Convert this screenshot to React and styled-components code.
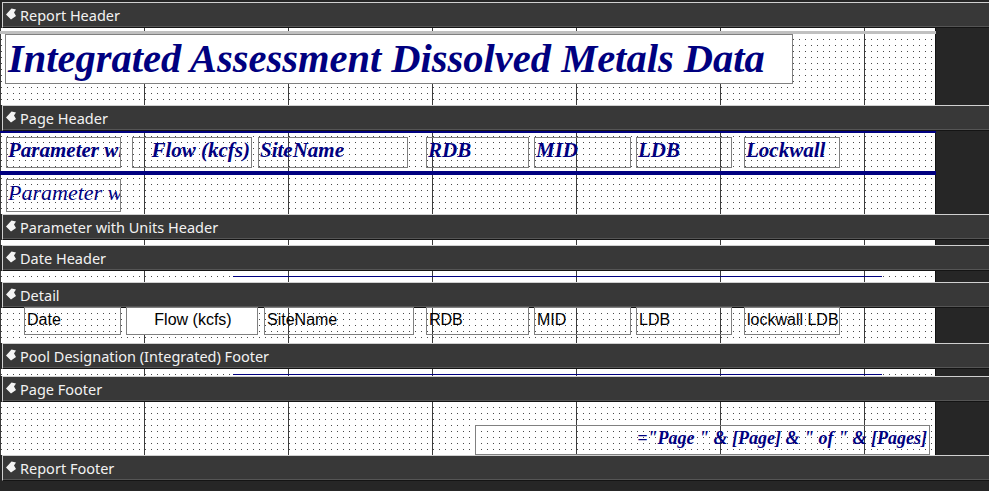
import React from 'react';
import styled, { createGlobalStyle } from 'styled-components';

const GlobalStyle = createGlobalStyle`
  html, body {
    margin: 0;
    padding: 0;
    background: #262626;
  }
  body {
    font-family: "Noto Sans", "Liberation Sans", sans-serif;
  }
`;

const NAVY = '#000080';

const Designer = styled.div`
  width: 989px;
  height: 491px;
  overflow: hidden;
  box-sizing: border-box;
  padding-top: 2px;
  background: #262626;
  display: flex;
  flex-direction: column;
`;

const Bar = styled.div`
  flex: none;
  height: 26px;
  box-sizing: border-box;
  margin-left: 2px;
  background: #383838;
  border-top: 1px solid #d0d0d0;
  border-left: 1px solid #d0d0d0;
  border-bottom: 1px solid #141414;
  box-shadow: inset 0 -1px 0 #555;
  display: flex;
  align-items: center;
  gap: 3px;
  padding-left: 3px;
  color: #f2f2f2;
  font-size: 14.5px;
`;

const Body = styled.div`
  flex: none;
  height: ${p => p.$h}px;
  display: flex;
  background: #262626;
`;

// design surface: white with ruler lines every inch and the dotted grid
const Canvas = styled.div`
  position: relative;
  width: 936px;
  height: 100%;
  background-color: #fff;
  background-image: repeating-linear-gradient(90deg, #3c3c3c 0 1px, transparent 1px 144px);
  box-shadow: inset -1px 0 0 #111;

  &::before {
    content: '';
    position: absolute;
    left: 0;
    top: 0;
    right: 4px;
    bottom: 0;
    background: repeating-linear-gradient(90deg, transparent 0 1px, #4a4a4a 1px 2px, transparent 2px 6px);
    mask-image: repeating-linear-gradient(180deg, transparent 0 5px, #000 5px 6px);
    -webkit-mask-image: repeating-linear-gradient(180deg, transparent 0 5px, #000 5px 6px);
  }
`;

const Control = styled.div`
  position: absolute;
  left: ${p => p.$x}px;
  top: ${p => p.$y}px;
  width: ${p => p.$w}px;
  height: ${p => p.$h}px;
  box-sizing: border-box;
  border: 1px solid #808080;
  background: ${p => (p.$fill ? '#fff' : 'transparent')};
  overflow: hidden;
  white-space: nowrap;
  display: flex;
  align-items: center;
  justify-content: ${p => p.$align || 'flex-start'};
  padding-left: 1px;
  padding-right: ${p => (p.$align === 'flex-end' ? '1px' : '0')};
`;

const Title = styled(Control)`
  font-family: "Liberation Serif", "Times New Roman", serif;
  font-weight: bold;
  font-style: italic;
  font-size: 40.5px;
  line-height: 48px;
  color: ${NAVY};
  padding-left: 2px;
`;

const HeadLabel = styled(Control)`
  font-family: "Liberation Serif", "Times New Roman", serif;
  font-weight: bold;
  font-style: italic;
  font-size: 21px;
  color: ${NAVY};
  padding-bottom: 4px;
`;

const GroupField = styled(Control)`
  font-family: "Liberation Serif", "Times New Roman", serif;
  font-style: italic;
  font-size: 22px;
  color: ${NAVY};
  padding-bottom: 5px;
`;

const DetailField = styled(Control)`
  font-family: "Liberation Sans", Arial, sans-serif;
  font-size: 16px;
  color: #000;
  padding-left: 2px;
  padding-bottom: 3px;
`;

const Expr = styled(Control)`
  font-family: "Liberation Serif", "Times New Roman", serif;
  font-weight: bold;
  font-style: italic;
  font-size: 18px;
  color: ${NAVY};
  padding-right: 2px;
  padding-bottom: 4px;
`;

const Rule = styled.div`
  position: absolute;
  left: ${p => p.$x}px;
  top: ${p => p.$y}px;
  width: ${p => p.$w}px;
  height: ${p => p.$h}px;
  background: ${p => p.$color || NAVY};
`;

const Dark = styled.div`
  flex: 1;
`;

const SectionIcon = () => (
  <svg width="11" height="12" viewBox="0 0 11 12" style={{ marginTop: -3 }}>
    <path d="M0 6.5 L5.5 0.5 L10 1.5 L8 4.5 L10 8 L5 11.5 Z" fill="#f4f4f4" />
  </svg>
);

const Section = ({ title, height, children }) => (
  <>
    <Bar>
      <SectionIcon />
      <span>{title}</span>
    </Bar>
    <Body $h={height}>
      <Canvas>{children}</Canvas>
      <Dark />
    </Body>
  </>
);

const headLabels = [
  { t: 'Parameter with Units', x: 6, w: 115 },
  { t: 'Flow (kcfs)', x: 132, w: 120, align: 'flex-end' },
  { t: 'SiteName', x: 258, w: 150 },
  { t: 'RDB', x: 426, w: 103 },
  { t: 'MID', x: 534, w: 97 },
  { t: 'LDB', x: 636, w: 96 },
  { t: 'Lockwall', x: 744, w: 96 },
];

const detailFields = [
  { t: 'Date', x: 24, w: 97 },
  { t: 'Flow (kcfs)', x: 126, w: 132, align: 'center', fill: true },
  { t: 'SiteName', x: 264, w: 150 },
  { t: 'RDB', x: 426, w: 103 },
  { t: 'MID', x: 534, w: 97 },
  { t: 'LDB', x: 636, w: 96 },
  { t: 'lockwall LDB', x: 744, w: 96 },
];

export default function App() {
  return (
    <>
      <GlobalStyle />
      <Designer>
        <Section title="Report Header" height={77}>
          <Rule $x={0} $y={3} $w={936} $h={3} $color="#c0c0c0" />
          <Title $x={5} $y={6} $w={788} $h={50} $fill>
            Integrated Assessment Dissolved Metals Data
          </Title>
        </Section>

        <Section title="Page Header" height={83}>
          <Rule $x={0} $y={0} $w={936} $h={2} />
          {headLabels.map(l => (
            <HeadLabel key={l.t} $x={l.x} $y={6} $w={l.w} $h={31} $align={l.align}>
              {l.t}
            </HeadLabel>
          ))}
          <Rule $x={0} $y={40} $w={936} $h={4} />
          <GroupField $x={6} $y={48} $w={115} $h={33}>
            Parameter with Units
          </GroupField>
        </Section>

        <Section title="Parameter with Units Header" height={5} />

        <Section title="Date Header" height={11}>
          <Rule $x={233} $y={5} $w={649} $h={1} />
        </Section>

        <Section title="Detail" height={35}>
          {detailFields.map(f => (
            <DetailField
              key={f.t}
              $x={f.x}
              $y={-1}
              $w={f.w}
              $h={28}
              $align={f.align}
              $fill={f.fill}
            >
              {f.t}
            </DetailField>
          ))}
        </Section>

        <Section title="Pool Designation (Integrated) Footer" height={7}>
          <Rule $x={233} $y={5} $w={649} $h={1} />
        </Section>

        <Section title="Page Footer" height={53}>
          <Expr $x={475} $y={23} $w={455} $h={30} $align="flex-end">
            ="Page " &amp; [Page] &amp; " of " &amp; [Pages]
          </Expr>
        </Section>

        <Bar>
          <SectionIcon />
          <span>Report Footer</span>
        </Bar>
      </Designer>
    </>
  );
}
